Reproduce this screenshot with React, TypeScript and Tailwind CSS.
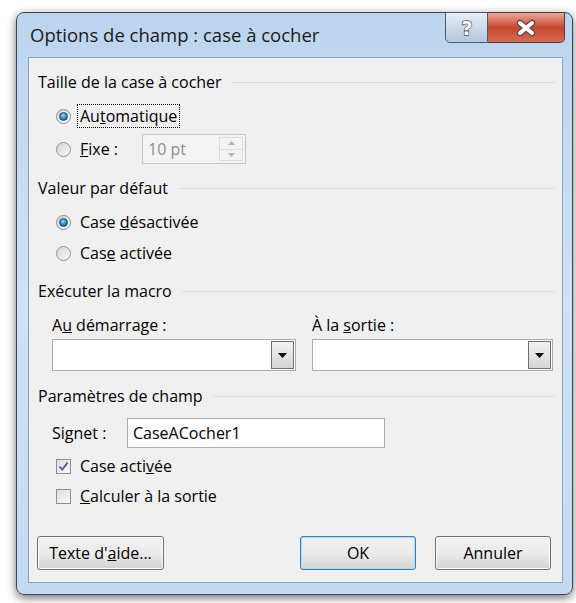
import React from "react";

function Radio({ checked }: { checked?: boolean }) {
  return (
    <span className="flex h-[15px] w-[15px] shrink-0 items-center justify-center rounded-full border border-[#8e8f8f] bg-linear-to-br from-[#d4d4d4] to-[#fbfbfb]">
      {checked && (
        <span className="h-[9px] w-[9px] rounded-full border border-[#1d4f7c] bg-[radial-gradient(circle_at_45%_35%,#9fe0fb,#2a86c4_50%,#0c4477)]" />
      )}
    </span>
  );
}

function Checkbox({ checked }: { checked?: boolean }) {
  return (
    <span className="flex h-[15px] w-[15px] shrink-0 items-center justify-center border border-[#8e8f8f] bg-linear-to-br from-[#dcdcdc] to-[#fafafa]">
      {checked && (
        <svg width="11" height="11" viewBox="0 0 11 11">
          <path d="M1.5 5.5 L4.3 8.6 L9.6 1.6" fill="none" stroke="#4a5f97" strokeWidth="1.8" />
        </svg>
      )}
    </span>
  );
}

function GroupHeader({ label, mt }: { label: string; mt: string }) {
  return (
    <div className={`flex h-[20px] items-center pl-[9px] ${mt}`}>
      <span className="whitespace-nowrap">{label}</span>
      <span className="ml-[10px] mr-[7px] h-px flex-1 bg-[#d5dfe5]" />
    </div>
  );
}

function Combo({ width }: { width: string }) {
  return (
    <div className={`flex h-[32px] ${width} border border-[#abadb3] bg-white`}>
      <div className="flex-1" />
      <div className="m-[1px] flex w-[23px] items-center justify-center border border-[#707070] bg-linear-to-b from-[#f2f2f2] to-[#d6d6d6]">
        <svg width="9" height="5" viewBox="0 0 9 5">
          <path d="M0 0 H9 L4.5 5 Z" fill="#000" />
        </svg>
      </div>
    </div>
  );
}

function Button({ children, width, isDefault }: { children: React.ReactNode; width: string; isDefault?: boolean }) {
  return (
    <button
      className={`flex h-[34px] ${width} items-center justify-center rounded-[3px] border bg-linear-to-b from-[#f2f2f2] via-[#ebebeb] to-[#d3d3d3] ${
        isDefault
          ? "border-[#3c7fb1] shadow-[inset_0_0_0_1px_#a9dcf6,inset_0_0_2px_1px_#d2eefb]"
          : "border-[#707070] shadow-[inset_0_0_0_1px_#fcfcfc]"
      }`}
    >
      {children}
    </button>
  );
}

export default function App() {
  return (
    <div className="h-[603px] w-[576px] bg-white pl-[16px] pt-[12px] font-['Open_Sans',sans-serif] text-[16px] text-[#000]">
      <div className="relative flex h-[583px] w-[557px] flex-col rounded-[8px] border border-[#3b4652] bg-linear-to-b from-[#bcd4ee] via-[#cfe2f6] to-[#c2daf3] pb-[11px] pl-[11px] pr-[9px] shadow-[0_3px_10px_rgba(0,0,0,0.55)]">
        {/* title bar */}
        <div className="flex h-[44px] shrink-0 items-center pl-[2px] text-[18.5px] text-[#1b1b1b]">
          Options de champ : case à cocher
        </div>

        {/* caption buttons */}
        <div className="absolute right-[7px] top-[-1px] flex h-[31px]">
          <div className="flex w-[43px] items-center justify-center rounded-bl-[5px] border border-[#4f5966] bg-linear-to-b from-[#e6eef7] via-[#cbd9e9] to-[#b5c8dd]">
            <svg width="18" height="20" viewBox="0 0 18 20">
              <text x="9" y="17" textAnchor="middle" fontFamily="DejaVu Sans, sans-serif" fontWeight="bold" fontSize="19" fill="#fff" stroke="#4b5563" strokeWidth="1.4" paintOrder="stroke">?</text>
            </svg>
          </div>
          <div className="flex w-[77px] items-center justify-center rounded-br-[5px] border border-l-0 border-[#4f3a36] bg-linear-to-b from-[#e8a798] via-[#c8452f] to-[#d66d55]">
            <svg width="22" height="18" viewBox="0 0 22 18">
              <path d="M5 4 L17 14 M17 4 L5 14" stroke="#5a4a48" strokeWidth="6.5" strokeLinecap="round" />
              <path d="M5 4 L17 14 M17 4 L5 14" stroke="#fff" strokeWidth="4" strokeLinecap="round" />
            </svg>
          </div>
        </div>

        {/* client area */}
        <div className="flex flex-1 flex-col border border-[#8ea3ba] bg-[#f0f0f0] pb-[12px]">
          <GroupHeader label="Taille de la case à cocher" mt="mt-[14px]" />
          <div className="ml-[27px] mt-[12px] flex h-[24px] items-center gap-[6px]">
            <Radio checked />
            <span className="flex h-[24px] items-center border border-dotted border-[#000] px-[2px]">
              Au<u>t</u>omatique
            </span>
          </div>
          <div className="ml-[27px] mt-[6px] flex h-[30px] items-center">
            <Radio />
            <span className="ml-[9px] w-[62px]">
              <u>F</u>ixe :
            </span>
            <div className="flex h-[30px] w-[104px] border border-[#c9c9c9] bg-[#f4f4f4]">
              <span className="flex flex-1 items-center pl-[5px] text-[#8d8d8d]">10 pt</span>
              <div className="m-[2px] flex w-[24px] flex-col border border-[#dcdcdc]">
                <div className="flex flex-1 items-center justify-center border-b border-[#dcdcdc]">
                  <svg width="7" height="4" viewBox="0 0 7 4">
                    <path d="M0 4 H7 L3.5 0 Z" fill="#b5b5b5" />
                  </svg>
                </div>
                <div className="flex flex-1 items-center justify-center">
                  <svg width="7" height="4" viewBox="0 0 7 4">
                    <path d="M0 0 H7 L3.5 4 Z" fill="#b5b5b5" />
                  </svg>
                </div>
              </div>
            </div>
          </div>

          <GroupHeader label="Valeur par défaut" mt="mt-[14px]" />
          <div className="ml-[27px] mt-[12px] flex h-[24px] items-center gap-[9px]">
            <Radio checked />
            <span>
              Case <u>d</u>ésactivée
            </span>
          </div>
          <div className="ml-[27px] mt-[7px] flex h-[24px] items-center gap-[9px]">
            <Radio />
            <span>
              Cas<u>e</u> activée
            </span>
          </div>

          <GroupHeader label="Exécuter la macro" mt="mt-[16px]" />
          <div className="ml-[23px] mt-[14px] flex h-[20px] items-center">
            <span className="w-[260px]">
              A<u>u</u> démarrage :
            </span>
            <span>
              À la <u>s</u>ortie :
            </span>
          </div>
          <div className="ml-[23px] mt-[4px] flex gap-[16px]">
            <Combo width="w-[244px]" />
            <Combo width="w-[241px]" />
          </div>

          <GroupHeader label="Paramètres de champ" mt="mt-[15px]" />
          <div className="ml-[23px] mt-[12px] flex h-[30px] items-center">
            <span className="w-[75px]">Signet :</span>
            <div className="flex h-[30px] w-[258px] items-center border border-[#abadb3] bg-white pl-[5px]">
              CaseACocher1
            </div>
          </div>
          <div className="ml-[27px] mt-[6px] flex h-[24px] items-center gap-[9px]">
            <Checkbox checked />
            <span>
              Case acti<u>v</u>ée
            </span>
          </div>
          <div className="ml-[27px] mt-[6px] flex h-[24px] items-center gap-[9px]">
            <Checkbox />
            <span>
              <u>C</u>alculer à la sortie
            </span>
          </div>

          <div className="mt-auto flex items-center pl-[8px] pr-[11px]">
            <Button width="w-[127px]">
              Texte d'<u>a</u>ide...
            </Button>
            <div className="flex-1" />
            <Button width="w-[116px]" isDefault>
              OK
            </Button>
            <div className="w-[19px]" />
            <Button width="w-[116px]">Annuler</Button>
          </div>
        </div>
      </div>
    </div>
  );
}
